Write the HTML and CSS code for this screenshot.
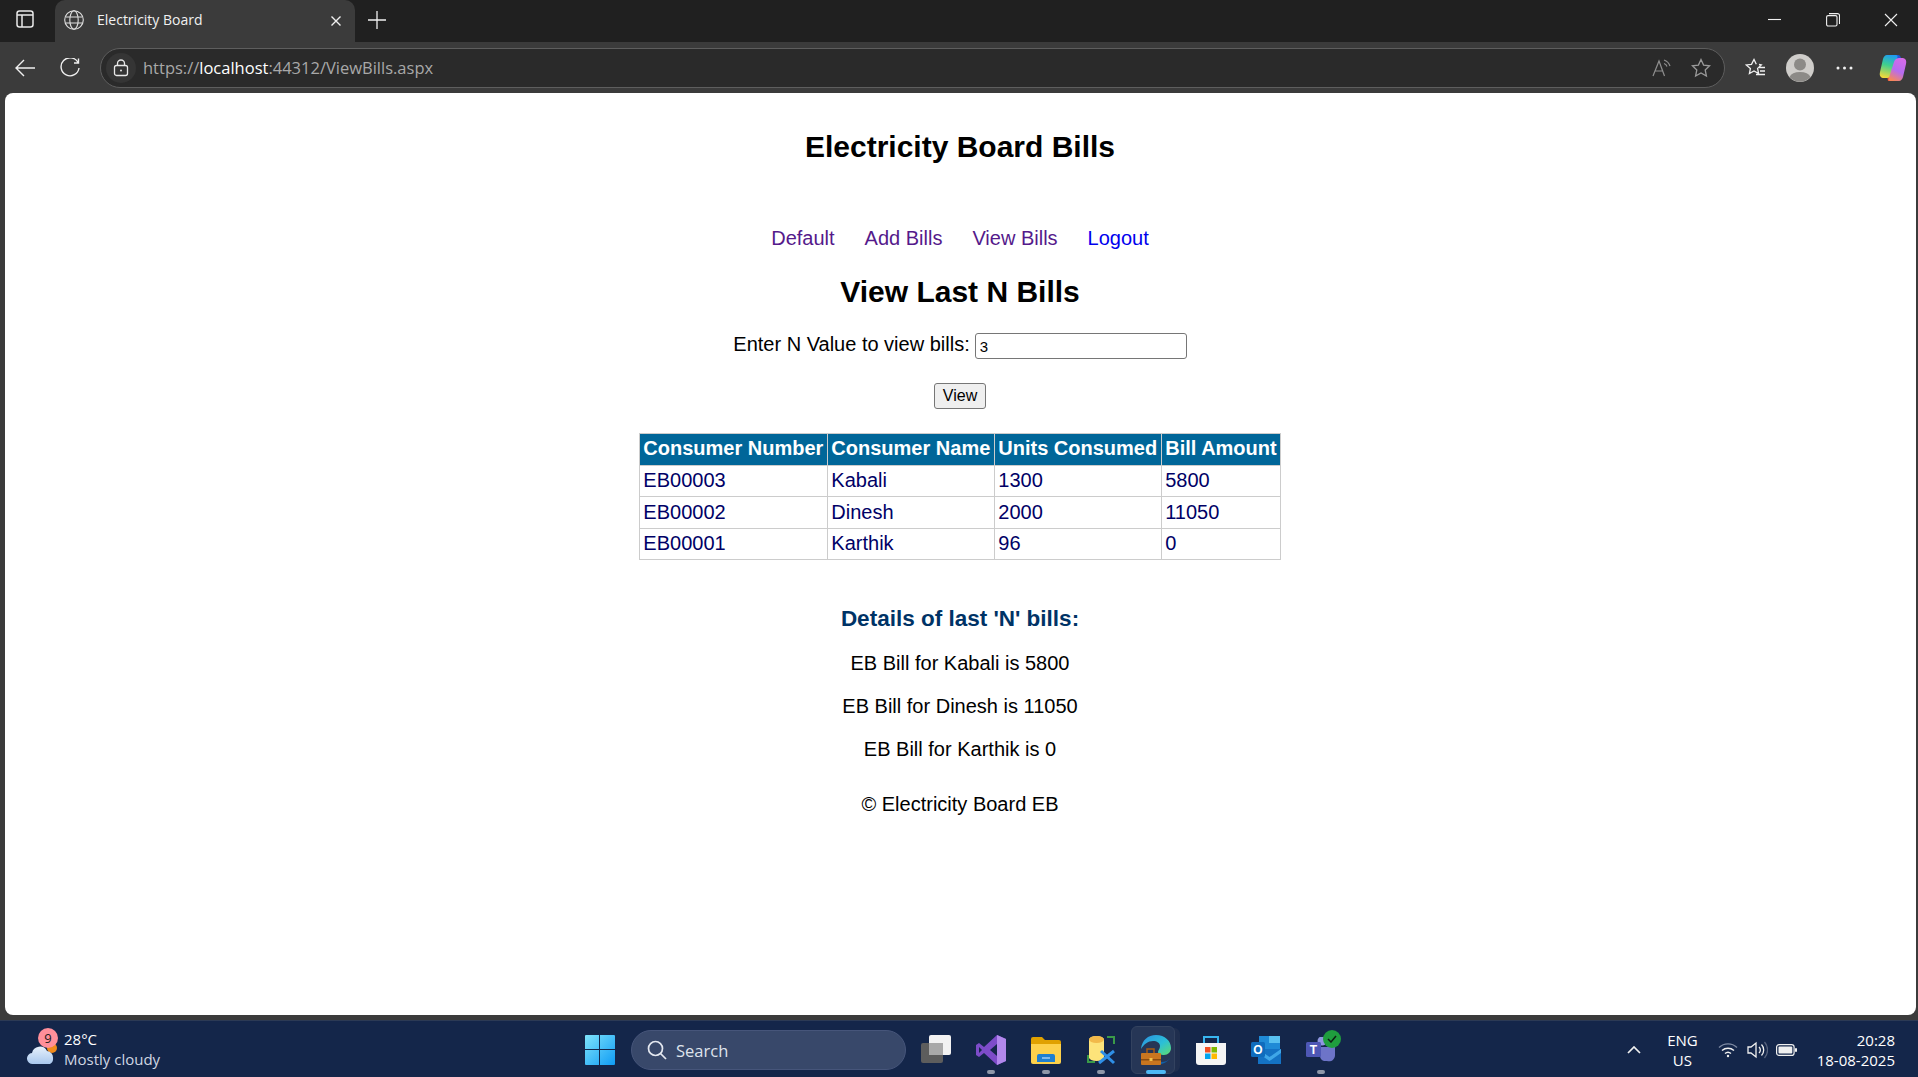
FILE: index.html
```html
<!DOCTYPE html>
<html>
<head>
  <title>Electricity Board</title>
  <link rel="stylesheet" href="styles.css">
</head>
<body>
  <div class="tabstrip">
    <svg class="tabs-icon" width="20" height="20" viewBox="0 0 20 20" fill="none" stroke="#e8e8e8" stroke-width="1.5"><rect x="2" y="2" width="16" height="16" rx="2.5"/><path d="M2 6h16M7 6v12"/></svg>
    <div class="tab">
      <svg width="20" height="20" viewBox="0 0 20 20" fill="none" stroke="#e0e0e0" stroke-width="1.1"><circle cx="10" cy="10" r="9.3"/><ellipse cx="10" cy="10" rx="4.2" ry="9.3"/><path d="M1.5 7h17M1.5 13h17"/></svg>
      <span class="tab-title">Electricity Board</span>
      <svg class="tab-close" width="12" height="12" viewBox="0 0 12 12" stroke="#f0f0f0" stroke-width="1.4"><path d="M1.5 1.5l9 9M10.5 1.5l-9 9"/></svg>
    </div>
    <svg class="new-tab" width="18" height="18" viewBox="0 0 18 18" stroke="#f0f0f0" stroke-width="1.3"><path d="M9 0v18M0 9h18"/></svg>
    <div class="window-btns">
      <svg width="14" height="14" viewBox="0 0 14 14" stroke="#f0f0f0" stroke-width="1.1"><path d="M0 6.5h13"/></svg>
      <svg width="14" height="14" viewBox="0 0 14 14" fill="none" stroke="#f0f0f0" stroke-width="1.1"><rect x="0.6" y="2.6" width="10.4" height="10.4" rx="1.5"/><path d="M3 .6h8.5a2 2 0 0 1 2 2V11"/></svg>
      <svg width="14" height="14" viewBox="0 0 14 14" stroke="#f0f0f0" stroke-width="1.1"><path d="M1 1l12 12M13 1L1 13"/></svg>
    </div>
  </div>

  <div class="toolbar">
    <svg class="tool-back" width="20" height="18" viewBox="0 0 20 18" fill="none" stroke="#efefef" stroke-width="1.4"><path d="M20 9H1M9 1L1 9l8 8"/></svg>
    <svg class="tool-reload" width="20" height="20" viewBox="0 0 20 20" fill="none" stroke="#efefef" stroke-width="1.4"><path d="M18 4.5A9 9 0 1 0 19 10M18.5 .5v4.5h-4.5"/></svg>
    <div class="urlbar">
      <div class="lock">
        <svg width="16" height="18" viewBox="0 0 16 18" fill="none" stroke="#e8e8e8" stroke-width="1.3"><rect x="1.5" y="6.5" width="13" height="10" rx="2"/><path d="M4.5 6.5V4.5a3.5 3.5 0 0 1 7 0v2"/><circle cx="8" cy="11.5" r="1" fill="#e8e8e8" stroke="none"/></svg>
      </div>
      <div class="url"><span class="dim">https://</span>localhost<span class="dim">:44312/ViewBills.aspx</span></div>
      <svg class="url-read" width="20" height="20" viewBox="0 0 20 20" fill="none" stroke="#8f8f8f" stroke-width="1.2"><path d="M1 18L7 3l5.5 15M3 13h8M12 2c3 1 5 3 6 6M12 5.5c1.5.5 2.5 1.5 3 3"/></svg>
      <svg class="url-star" width="20" height="20" viewBox="0 0 20 20" fill="none" stroke="#9a9a9a" stroke-width="1.3"><path d="M10 1.5l2.6 5.600 6 .7-4.400 4.200 1.200 6L10 15l-5.400 3 1.200-6L1.400 7.800l6-.7z"/></svg>
    </div>
    <svg class="tool-fav" width="21" height="20" viewBox="0 0 21 20" fill="none" stroke="#f0f0f0" stroke-width="1.3"><path d="M14 6.5l2.3.4-3.700 3.500 1 5.100L9 13l-4.600 2.500 1-5.100L1.200 6.900l5.300-.6L9 1.500l2.300 4.800M14 9.500h6M15 13h5M11 16.500h9"/></svg>
    <svg class="tool-avatar" width="28" height="28" viewBox="0 0 28 28"><circle cx="14" cy="14" r="14" fill="#cfcdca"/><circle cx="14" cy="10.5" r="6" fill="#8c8a87"/><path d="M3.500 23a11 7 0 0 1 21 0a14 14 0 0 1-21 0z" fill="#8c8a87"/></svg>
    <svg class="tool-more" width="17" height="4" viewBox="0 0 17 4" fill="#f0f0f0"><circle cx="2" cy="2" r="1.5"/><circle cx="8.5" cy="2" r="1.5"/><circle cx="15" cy="2" r="1.5"/></svg>
    <svg class="tool-copilot" width="28" height="28" viewBox="0 0 28 28">
      <defs>
        <linearGradient id="cpA" x1="0.6" y1="0" x2="0.4" y2="1"><stop offset="0" stop-color="#1f9cf0"/><stop offset=".45" stop-color="#3ecf8e"/><stop offset="1" stop-color="#f0d93c"/></linearGradient>
        <linearGradient id="cpB" x1="0.7" y1="0" x2="0.3" y2="1"><stop offset="0" stop-color="#d66be8"/><stop offset=".55" stop-color="#b66cf0"/><stop offset="1" stop-color="#f7875a"/></linearGradient>
      </defs>
      <path d="M15 1h4c2 0 3 2 3 4v3h-7z" fill="#2456d8"/>
      <path d="M9 27h5l3-5H8z" fill="#e8482c"/>
      <path d="M8 1h9c1 0 2 1 1.500 2L13 20c-1 3-3 4-5 4H5c-3 0-5-2-4-6L4 5c.6-2 2-4 4-4z" fill="url(#cpA)"/>
      <path d="M20 27h-9c-1 0-2-1-1.500-2L15 8c1-3 3-4 5-4h3c3 0 5 2 4 6l-3 13c-.6 2-2 4-4 4z" fill="url(#cpB)"/>
    </svg>
  </div>

  <div class="page-wrap">
    <div class="page">
      <h1>Electricity Board Bills</h1>
      <nav class="menu">
        <a href="#" class="seen">Default</a>
        <a href="#" class="seen">Add Bills</a>
        <a href="#" class="seen">View Bills</a>
        <a href="#">Logout</a>
      </nav>
      <h2>View Last N Bills</h2>
      <div class="field">
        <label for="nValue">Enter N Value to view bills:</label>
        <input id="nValue" type="text" value="3">
      </div>
      <button type="button" class="view-btn">View</button>
      <table class="bills">
        <tr><th>Consumer Number</th><th>Consumer Name</th><th>Units Consumed</th><th>Bill Amount</th></tr>
        <tr><td>EB00003</td><td>Kabali</td><td>1300</td><td>5800</td></tr>
        <tr><td>EB00002</td><td>Dinesh</td><td>2000</td><td>11050</td></tr>
        <tr><td>EB00001</td><td>Karthik</td><td>96</td><td>0</td></tr>
      </table>
      <h3>Details of last 'N' bills:</h3>
      <p>EB Bill for Kabali is 5800</p>
      <p>EB Bill for Dinesh is 11050</p>
      <p>EB Bill for Karthik is 0</p>
      <footer>© Electricity Board EB</footer>
    </div>
  </div>

  <div class="taskbar">
    <div class="weather">
      <svg class="cloud" width="32" height="24" viewBox="0 0 32 24">
        <defs><linearGradient id="cl" x1="0" y1="0" x2="0" y2="1"><stop offset="0" stop-color="#e6f0fb"/><stop offset="1" stop-color="#a9c8ee"/></linearGradient></defs>
        <circle cx="25" cy="7" r="5" fill="#f08a1c"/>
        <path d="M6 23a5.500 5.500 0 0 1-1-11 8 8 0 0 1 15-2 6.500 6.500 0 0 1 6 7 6 6 0 0 1-3 6z" fill="url(#cl)"/>
      </svg>
      <span class="badge">9</span>
      <div class="weather-text">
        <div>28°C</div>
        <div class="dim-text">Mostly cloudy</div>
      </div>
    </div>

    <div class="apps">
      <svg class="start" width="30" height="30" viewBox="0 0 30 30">
        <defs><linearGradient id="win" x1="0" y1="0" x2="1" y2="1"><stop offset="0" stop-color="#7ee3fb"/><stop offset="1" stop-color="#0f9cf5"/></linearGradient></defs>
        <path d="M1 0h13v14H0V1a1 1 0 0 1 1-1zM15 0h14a1 1 0 0 1 1 1v13H15zM0 15h14v15H1a1 1 0 0 1-1-1zM15 15h15v14a1 1 0 0 1-1 1H15z" fill="url(#win)"/>
      </svg>
      <div class="search">
        <svg width="20" height="20" viewBox="0 0 20 20" fill="none" stroke="#e4e8f0" stroke-width="1.7"><circle cx="8.5" cy="8.5" r="7"/><path d="M13.500 13.500l5.500 5.500"/></svg>
        <span>Search</span>
      </div>
      <div class="app">
        <svg width="30" height="30" viewBox="0 0 30 30"><rect x="0" y="8" width="22" height="20" rx="2" fill="#5d5d5d"/><rect x="8" y="0" width="22" height="20" rx="2" fill="#f2f2f2"/><rect x="8" y="8" width="14" height="12" fill="#a9a9a9"/></svg>
      </div>
      <div class="app running">
        <svg width="30" height="30" viewBox="0 0 30 30"><path d="M21 0l9 4v22l-9 4L8 18l-5 4-3-2V10l3-2 5 4z" fill="#7d4cc9"/><path d="M21 0l9 4v22l-9 4z" fill="#b288ec"/><path d="M21 9l-7 6 7 6z" fill="#14264a"/><path d="M3 12v6l3-3z" fill="#14264a"/></svg>
      </div>
      <div class="app running">
        <svg width="30" height="28" viewBox="0 0 30 28"><path d="M0 3a2 2 0 0 1 2-2h9l3 3h14a2 2 0 0 1 2 2v4H0z" fill="#e0a100"/><path d="M0 8h30v18a2 2 0 0 1-2 2H2a2 2 0 0 1-2-2z" fill="#fdd14b"/><path d="M6 26v-6a2 2 0 0 1 2-2h14a2 2 0 0 1 2 2v6z" fill="#1f7fd0"/><path d="M11 22h8" stroke="#bfe0ff" stroke-width="1.2"/></svg>
      </div>
      <div class="app running">
        <svg width="30" height="30" viewBox="0 0 30 30" fill="none"><path d="M21 2h7v7M2 20v7h7" stroke="#3a9a48" stroke-width="2"/><path d="M3 4.500a7.500 3.500 0 0 1 15 0v18a7.500 3.500 0 0 1-15 0z" fill="#fde37a"/><ellipse cx="10.500" cy="4.500" rx="7.500" ry="3.500" fill="#f2b94a"/><path d="M13 28L28 16M15 16l13 12" stroke="#2f8fe6" stroke-width="3"/></svg>
      </div>
      <div class="app active">
        <span class="active-back"></span>
        <span class="active-box"></span>
        <svg width="30" height="30" viewBox="0 0 30 30">
          <defs><linearGradient id="edge" x1="0" y1="0" x2="1" y2="1"><stop offset="0" stop-color="#2b8fe0"/><stop offset=".55" stop-color="#2bbfd8"/><stop offset="1" stop-color="#5fdc6e"/></linearGradient></defs>
          <path d="M0 14C1 5 7 0 15 0c9 0 15 6 15 13 0 4-3 7-7 7-3 0-6-1-6-3 0-2 2-3 2-6 0-3-3-5-7-5C7 6 3 9 0 14z" fill="url(#edge)"/>
          <path d="M14 30c-3 0-6-1-8-3h14c4 0 7-1 9-4-2 4-8 7-15 7z" fill="#0f5fa8"/>
          <rect x="6" y="14" width="7" height="6" fill="none" stroke="#a85c12" stroke-width="1.5"/>
          <rect x="0" y="18" width="20" height="12" rx="1" fill="#c9761f"/><rect x="0" y="24" width="20" height="1.5" fill="#8a4c10"/><rect x="8.500" y="23" width="3" height="3" fill="#f2c14a"/>
        </svg>
      </div>
      <div class="app">
        <svg width="30" height="30" viewBox="0 0 30 30"><path d="M8 8V2h14v6" fill="none" stroke="#38b6f0" stroke-width="2"/><path d="M0 8h30v19a3 3 0 0 1-3 3H3a3 3 0 0 1-3-3z" fill="#f5f5f5"/><rect x="9" y="12" width="5.5" height="5.5" fill="#f25022"/><rect x="15.5" y="12" width="5.5" height="5.5" fill="#7fba00"/><rect x="9" y="18.5" width="5.5" height="5.5" fill="#00a4ef"/><rect x="15.5" y="18.5" width="5.5" height="5.5" fill="#ffb900"/></svg>
      </div>
      <div class="app">
        <svg width="30" height="28" viewBox="0 0 30 28"><rect x="8" y="0" width="21" height="14" fill="#1f8ad6"/><rect x="18" y="0" width="11" height="7" fill="#58c0f0"/><path d="M7 13h23v15H7z" fill="#1472c4"/><path d="M7 13l11.500 8L30 13v4L18.500 25 7 17z" fill="#3fa6e8"/><rect x="0" y="6" width="14" height="15" rx="1.5" fill="#0f6cbd"/><text x="7" y="18" text-anchor="middle" class="icon-letter">O</text></svg>
      </div>
      <div class="app running">
        <svg width="30" height="26" viewBox="0 0 30 26"><circle cx="24" cy="6" r="4" fill="#7f86d6"/><path d="M14 10h15v8a6 6 0 0 1-8 6h-3a6 6 0 0 1-4-6z" fill="#6d74c8"/><circle cx="16" cy="4" r="4.5" fill="#8f96e0"/><rect x="0" y="5" width="15" height="15" rx="1.5" fill="#4e57b5"/><text x="7.5" y="17" text-anchor="middle" class="icon-letter">T</text></svg>
        <span class="status">
          <svg width="10" height="8" viewBox="0 0 10 8" fill="none" stroke="#0d1f12" stroke-width="1.5"><path d="M1 4l3 3 5-6"/></svg>
        </span>
      </div>
    </div>

    <div class="tray">
      <svg class="chevron" width="14" height="8" viewBox="0 0 14 8" fill="none" stroke="#f0f0f0" stroke-width="1.7"><path d="M1 7l6-6 6 6"/></svg>
      <div class="lang">ENG<br>US</div>
      <svg class="tray-wifi" width="20" height="16" viewBox="0 0 20 16" fill="none" stroke="#f0f0f0" stroke-width="1.4"><path d="M1 5.500a13 13 0 0 1 18 0" stroke="#7e8aa3"/><path d="M4 8.500a9 9 0 0 1 12 0M7 11.500a4.500 4.500 0 0 1 6 0"/><circle cx="10" cy="14" r="1.2" fill="#f0f0f0" stroke="none"/></svg>
      <svg class="tray-sound" width="21" height="18" viewBox="0 0 21 18" fill="none" stroke="#f0f0f0" stroke-width="1.3"><path d="M1 6v6h3l5 4V2L4 6z"/><path d="M12 6a4 4 0 0 1 0 6M14.500 3.500a8 8 0 0 1 0 11"/><path d="M17.500 1a12 12 0 0 1 0 16" stroke="#56627c"/></svg>
      <svg class="tray-battery" width="21" height="12" viewBox="0 0 21 12" fill="none" stroke="#f0f0f0" stroke-width="1.2"><rect x=".6" y=".6" width="17.5" height="10.8" rx="2.5"/><rect x="2.500" y="2.500" width="13.800" height="7" rx="1" fill="#f0f0f0" stroke="none"/><rect x="19" y="4" width="2" height="4" rx="1" fill="#f0f0f0" stroke="none"/></svg>
      <div class="clock">20:28<br>18-08-2025</div>
    </div>
  </div>
</body>
</html>
```

FILE: styles.css
```css
* { box-sizing: border-box; }
html, body { margin: 0; height: 100%; }
body {
  display: flex;
  flex-direction: column;
  height: 1077px;
  overflow: hidden;
  font-family: "Liberation Sans", Arial, sans-serif;
  background: #3b3b3b;
}
svg { display: block; flex: none; }

/* browser chrome */
.tabstrip {
  display: flex;
  align-items: center;
  height: 42px;
  background: #202020;
  color: #f0f0f0;
}
.tabs-icon { margin-left: 15px; margin-top: -4px; }
.tab {
  display: flex;
  align-items: center;
  width: 300px;
  height: 42px;
  margin-left: 20px;
  padding: 0 13px 3px 9px;
  background: #3b3b3b;
  border-radius: 10px 10px 0 0;
}
.tab-title {
  flex: 1;
  margin-left: 13px;
  font: 14px "Open Sans", sans-serif;
}
.tab-close { margin-top: 2px; }
.new-tab { margin-left: 13px; margin-top: -3px; }
.window-btns {
  display: flex;
  gap: 44px;
  margin-left: auto;
  margin-top: -3px;
  padding-right: 20px;
}

.toolbar {
  display: flex;
  align-items: center;
  height: 51px;
  padding-left: 15px;
  background: #3b3b3b;
}
.tool-reload { margin-left: 25px; }
.urlbar {
  display: flex;
  align-items: center;
  width: 1625px;
  height: 40px;
  margin-left: 20px;
  padding-left: 5px;
  border: 1px solid #5e5e5e;
  border-radius: 20px;
  background: #2a2a2a;
}
.lock {
  display: flex;
  align-items: center;
  justify-content: center;
  width: 30px;
  height: 30px;
  border-radius: 50%;
  background: #353535;
}
.url {
  flex: 1;
  margin-left: 7px;
  font: 16.5px "Open Sans", sans-serif;
  color: #fff;
}
.url .dim { color: #a8a8a8; }
.url-star { margin-left: 19px; margin-right: 13px; }
.tool-fav { margin-left: 20px; }
.tool-avatar { margin-left: 20px; }
.tool-more { margin-left: 22px; }
.tool-copilot { margin-left: 26px; }

/* page */
.page-wrap {
  flex: 1;
  padding: 0 2px 5px 5px;
}
.page {
  height: 100%;
  padding: 1px 1px 0 0;
  background: #fff;
  border-radius: 8px;
  text-align: center;
  color: #000;
  font-size: 20px;
}
h1 {
  margin: 35px 0 0;
  font-size: 30px;
  line-height: 35px;
}
.menu {
  display: flex;
  justify-content: center;
  gap: 30px;
  margin-top: 63px;
  line-height: 23px;
}
.menu a { color: #0000ee; text-decoration: none; }
.menu a.seen { color: #551a8b; }
h2 {
  margin: 24px 0 0;
  font-size: 30px;
  line-height: 35px;
}
.field {
  display: flex;
  justify-content: center;
  align-items: flex-start;
  gap: 5px;
  margin-top: 24px;
  line-height: 23px;
}
.field input {
  width: 212px;
  height: 26px;
  padding: 1px 4px;
  border: 1px solid #767676;
  border-radius: 3px;
  font: 15px "Liberation Sans", Arial, sans-serif;
}
.view-btn {
  display: block;
  height: 26px;
  margin: 24px auto 0;
  padding: 1px 8px;
  background: #efefef;
  border: 1px solid #767676;
  border-radius: 3px;
  font: 16px "Liberation Sans", Arial, sans-serif;
  color: #000;
}
.bills {
  margin: 24px auto 0;
  border-collapse: collapse;
  color: #000066;
  text-align: left;
}
.bills th {
  padding: 2px 3.5px 4px;
  height: 31.5px;
  background: #006699;
  color: #fff;
  border: 1px solid #ccc;
  font-weight: bold;
}
.bills td {
  padding: 3px 3.5px;
  height: 31.5px;
  border: 1px solid #ccc;
}
h3 {
  margin: 45px 0 0;
  font-size: 22.5px;
  line-height: 28px;
  color: #003366;
}
.page p {
  margin: 20px 0 0;
  line-height: 23px;
}
.page h3 + p { margin-top: 19px; }
footer {
  margin-top: 32px;
  line-height: 23px;
}

/* taskbar */
.taskbar {
  display: flex;
  align-items: center;
  height: 57px;
  padding-top: 2px;
  background: #14264a;
  border-top: 1px solid #2c3a55;
  color: #fff;
  font: 15px "Open Sans", sans-serif;
}
.weather {
  position: relative;
  display: flex;
  align-items: center;
  width: 585px;
  padding-left: 27px;
}
.cloud { margin-top: 6px; }
.badge {
  position: absolute;
  left: 38px;
  top: -3px;
  width: 20px;
  height: 20px;
  border-radius: 50%;
  background: #ff8f9a;
  color: #1a1a1a;
  text-align: center;
  font-size: 13px;
  line-height: 20px;
}
.weather-text { margin: -2px 0 0 5px; line-height: 20px; }
.dim-text { color: #d0d6e2; }
.apps {
  display: flex;
  align-items: center;
}
.search {
  display: flex;
  align-items: center;
  gap: 9px;
  width: 275px;
  height: 40px;
  margin-left: 16px;
  padding-left: 15px;
  background: #38486a;
  border: 1px solid #46557a;
  border-radius: 20px;
  color: #dfe3ec;
  font-size: 16.5px;
}
.app {
  position: relative;
  display: flex;
  align-items: center;
  justify-content: center;
  width: 55px;
  height: 48px;
}
.app svg { position: relative; }
.app:nth-child(3) { margin-left: 2px; }
.app.running::after,
.app.active::after {
  content: "";
  position: absolute;
  bottom: 0;
  left: 50%;
  width: 8px;
  height: 4px;
  margin-left: -4px;
  border-radius: 2px;
  background: #8e97a8;
}
.app.active::after {
  width: 20px;
  margin-left: -10px;
  background: #4db8f5;
}
.active-box {
  position: absolute;
  left: 3px;
  right: 8px;
  top: 0;
  bottom: 0;
  background: #263656;
  border: 1px solid #33425f;
  border-radius: 6px;
}
.active-back {
  position: absolute;
  right: 3px;
  width: 10px;
  top: 2px;
  bottom: 2px;
  border-radius: 0 6px 6px 0;
  background: #1f2e4e;
}
.status {
  position: absolute;
  right: 7px;
  top: 4px;
  display: flex;
  align-items: center;
  justify-content: center;
  width: 18px;
  height: 18px;
  border-radius: 50%;
  background: #1f9d3e;
}
.icon-letter {
  fill: #fff;
  font: bold 12px "Liberation Sans", Arial, sans-serif;
}
.tray {
  display: flex;
  align-items: center;
  margin-left: auto;
  padding-right: 23px;
}
.lang {
  margin-left: 26px;
  text-align: center;
  line-height: 20px;
}
.tray-wifi { margin-left: 20px; }
.tray-sound { margin-left: 9px; }
.tray-battery { margin-left: 8px; }
.clock {
  margin-left: 20px;
  text-align: right;
  line-height: 20px;
}
```
